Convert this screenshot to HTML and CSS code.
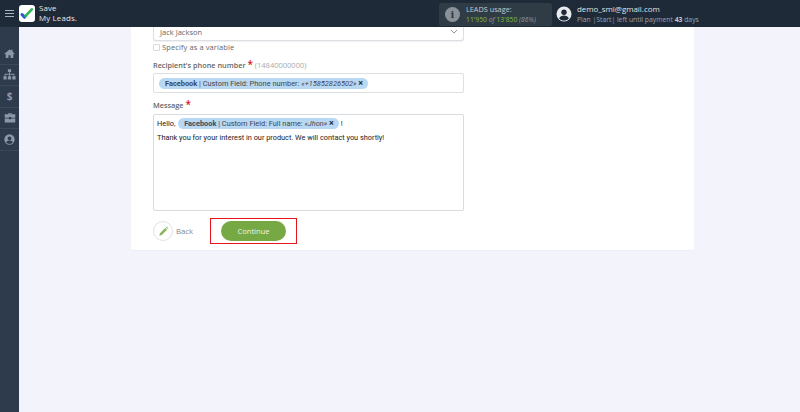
FILE: index.html
```html
<!DOCTYPE html>
<html lang="en">
<head>
<meta charset="utf-8">
<title>Save My Leads</title>
<link rel="stylesheet" href="styles.css">
</head>
<body>
<header class="topbar">
  <div class="burger"><span></span><span></span><span></span></div>
  <div class="logo">
    <svg viewBox="0 0 16 16" width="16" height="16"><path d="M3 9.500l2.500 2.600" stroke="#2d4fd0" stroke-width="3" fill="none" stroke-linecap="round"/><path d="M5.500 12.100l1.600-1.800" stroke="#17a673" stroke-width="3" fill="none"/><path d="M7.100 10.300L12.800 4.300" stroke="#35b55a" stroke-width="2.600" fill="none" stroke-linecap="round"/></svg>
  </div>
  <div class="brand">Save<br>My Leads.</div>
  <div class="usage">
    <div class="usage-icon">i</div>
    <div class="usage-text">
      <div class="usage-title">LEADS usage:</div>
      <div class="usage-nums"><b>11'950</b> <i>of</i> <b>13'850</b> <i class="pct">(86%)</i></div>
    </div>
  </div>
  <div class="account">
    <svg class="avatar" viewBox="0 0 16 16" width="16" height="16"><circle cx="8" cy="8" r="7.500" fill="#e8eaee"/><circle cx="8" cy="6.200" r="2.700" fill="#1f2a38"/><path d="M3.200 12.400c.8-2 2.800-2.900 4.800-2.900s4 .9 4.800 2.900C11.600 13.800 9.900 14.500 8 14.500s-3.600-.7-4.800-2.100z" fill="#1f2a38"/></svg>
    <div>
      <div class="email">demo_sml@gmail.com</div>
      <div class="plan">Plan |Start| left until payment <b>43</b> days</div>
    </div>
  </div>
</header>
<div class="body-row">
  <nav class="sidebar">
    <div class="nav-item"><svg viewBox="0 0 16 16" width="11" height="11"><path d="M8 2L0.500 8.400l.8.900L2.500 8.300V14.500h4v-4h3v4h4V8.300l1.200 1 .8-.9L12.500 5.400V2.500h-2v1.200z" fill="#8c98a8"/></svg></div>
    <div class="nav-item"><svg viewBox="0 0 16 16" width="13" height="13"><path d="M6 1.500h4v3.500H8.500v2.200H14v3h1.500v4h-4v-4H13v-2H8.500v2H10v4H6v-4h1.500v-2H3v2h1.500v4h-4v-4H2v-3h5.500V5H6z" fill="#8c98a8"/></svg></div>
    <div class="nav-item nav-dollar">$</div>
    <div class="nav-item"><svg viewBox="0 0 16 16" width="12" height="12"><path d="M5.500 3V1.800h5V3H15v4.500H9.500V6.500h-3v1H1V3zM6.700 3h2.600v-.4H6.700zM1 8.500h5.500v1h3v-1H15V14H1z" fill="#8c98a8"/></svg></div>
    <div class="nav-item"><svg viewBox="0 0 16 16" width="11" height="11"><circle cx="8" cy="8" r="7.500" fill="#8c98a8"/><circle cx="8" cy="6.200" r="2.700" fill="#2e3b4c"/><path d="M3.200 12.400c.8-2 2.800-2.900 4.800-2.900s4 .9 4.800 2.900C11.600 13.800 9.900 14.500 8 14.500s-3.600-.7-4.800-2.100z" fill="#2e3b4c"/></svg></div>
  </nav>
  <main class="content">
    <section class="card">
      <div class="select"><span>Jack Jackson</span><svg viewBox="0 0 10 6" width="8" height="5"><path d="M1 1l4 4 4-4" stroke="#777" fill="none"/></svg></div>
      <label class="check"><span class="box"></span>Specify as a variable</label>
      <div class="label phone-label">Recipient's phone number <em>*</em> <small>(14840000000)</small></div>
      <div class="input"><span class="tag"><b>Facebook</b> | Custom Field: Phone number: <i>«+15852826502»</i> <b class="x">×</b></span></div>
      <div class="label msg-label">Message <em>*</em></div>
      <div class="textarea">
        <div class="line">Hello, <span class="tag tag-msg"><b>Facebook</b> | Custom Field: Full name: <i>«Jhon»</i> <b class="x">×</b></span> !</div>
        <div class="line2">Thank you for your interest in our product. We will contact you shortly!</div>
      </div>
      <div class="actions">
        <div class="back"><span class="back-icon"><svg viewBox="0 0 16 16" width="11" height="11"><path d="M2 14l.8-3.500L10.500 2.800l2.700 2.700-7.700 7.700zM11.500 1.800l1-1 2.700 2.700-1 1z" fill="#8ab55a"/></svg></span>Back</div>
        <div class="highlight"><div class="continue">Continue</div></div>
      </div>
    </section>
  </main>
</div>
</body>
</html>
```

FILE: styles.css
```css
* { box-sizing: border-box; }
html, body { margin: 0; height: 100%; }
body {
  width: 800px; height: 412px; overflow: hidden;
  display: flex; flex-direction: column;
  font-family: "Open Sans", sans-serif; background: #f3f4fb;
}
.topbar {
  height: 27px; flex: none; display: flex; align-items: center;
  background: #1f2a38; color: #e8eaee;
}
.burger { width: 19px; display: flex; flex-direction: column; gap: 2px; align-items: center; margin-top: -1px; }
.burger span { display: block; width: 9px; height: 1px; background: #aab2bd; }
.logo {
  width: 16px; height: 17px; margin-bottom: 1px; background: #fff; border-radius: 3px;
  display: flex; align-items: center; justify-content: center;
}
.brand { margin-left: 4px; font: 500 7.900px/10px "Open Sans", sans-serif; color: #e6e8ec; margin-top: -1px; width: 105px; letter-spacing: .15px; margin-right: 295px; }
.usage {
  width: 113px; height: 23px; margin-top: 2px; flex: none; background: #2f3c46; border-radius: 2px;
  display: flex; align-items: center; padding-left: 6px; gap: 6px;
}
.usage-icon {
  width: 15px; height: 15px; border-radius: 50%; background: #8a9199; color: #2f3c46;
  font: 700 10px/15px "DejaVu Serif", serif; text-align: center; flex: none;
}
.usage-title { font-size: 7.300px; line-height: 9px; color: #c6cbd1; margin-bottom: 1px; }
.usage-nums { font-size: 6.800px; line-height: 9px; color: #8f979f; white-space: nowrap; }
.usage-nums b { font-weight: 400; color: #86b83f; }
.usage-nums .pct { color: #8f979f; }
.account { display: flex; align-items: center; margin-left: 4px; gap: 5px; }
.avatar { flex: none; }
.email { font-size: 7.900px; line-height: 10px; color: #dfe2e6; white-space: nowrap; }
.plan { font-size: 6.800px; line-height: 9px; margin-top: 1px; color: #9aa2ab; white-space: nowrap; }
.plan b { color: #c5c9ce; }
.body-row { flex: 1; display: flex; min-height: 0; }
.sidebar { width: 19px; flex: none; background: #2e3b4c; padding-top: 16px; }
.nav-item {
  height: 21.500px; display: flex; align-items: center; justify-content: center;
  border-bottom: 1px solid #3a4859;
}
.nav-dollar { color: #8c98a8; font: 700 10px/1 "Open Sans", sans-serif; }
.content { flex: 1; padding-left: 112px; }
.card { width: 563px; height: 224px; background: #fff; padding: 0 22px; border-bottom: 1px solid #eceef5; border-radius: 0 0 2px 2px; }
.select {
  height: 14px; width: 311px; border: 1px solid #dcdfe3; border-top: 0; border-radius: 0 0 3px 3px;
  display: flex; align-items: center; justify-content: space-between; padding: 0 5px 4px 6px;
  font-size: 7.500px; color: #666; box-shadow: 0 1px 1px #f0f0f0;
}
.check { display: flex; align-items: center; gap: 2px; height: 12px; font-size: 7.500px; font-weight: 500; color: #666; letter-spacing: .1px; }
.box { width: 7px; height: 7px; border: 1px solid #d5d8dc; border-radius: 1px; }
.label { font-size: 7.300px; font-weight: 600; color: #666; line-height: 10px; }
.label em { color: #d11; font-style: normal; font-size: 10px; line-height: 8px; }
.label small { font-size: 7.500px; font-weight: 400; color: #aaa; }
.phone-label { margin-top: 7px; height: 11px; }
.input {
  width: 311px; height: 20px; margin-top: 2px; border: 1px solid #dcdfe3; border-radius: 2px;
  display: flex; align-items: center; padding-left: 5px;
}
.tag {
  background: #b9d8f3; border-radius: 6px; height: 11px; padding: 0 5px 0 6px; white-space: nowrap;
  font: 400 7.400px/11px Roboto, sans-serif; color: #444; display: inline-block;
}
.tag b { font-weight: 700; color: #3a4a5a; }
.tag i { color: #445; }
.tag .x { font-size: 9px; line-height: 8px; color: #234; }
.msg-label { margin-top: 7px; height: 11px; }
.textarea {
  width: 311px; height: 97px; margin-top: 3px; border: 1px solid #d8dbdf; border-radius: 2px; padding: 3px 3px;
  font: 400 7.350px/11px Roboto, sans-serif; color: #222;
}
.line { white-space: nowrap; }
.tag-msg { margin: 0 0 0 1px; }
.line2 { margin-top: 3px; white-space: nowrap; }
.actions { display: flex; align-items: center; margin-top: 7px; }
.back { display: flex; align-items: center; gap: 3px; font-size: 7.800px; color: #888; width: 57px; }
.back-icon {
  width: 20px; height: 20px; border: 1px solid #dfe3e0; border-radius: 50%;
  display: flex; align-items: center; justify-content: center;
}
.highlight { width: 87px; height: 26px; border: 1px solid #e8141c; display: flex; align-items: center; justify-content: center; }
.continue {
  width: 65px; height: 20px; border-radius: 10px; background: #76a843; color: #f0f5e8;
  font-size: 7.600px; line-height: 20px; text-align: center;
}
```
